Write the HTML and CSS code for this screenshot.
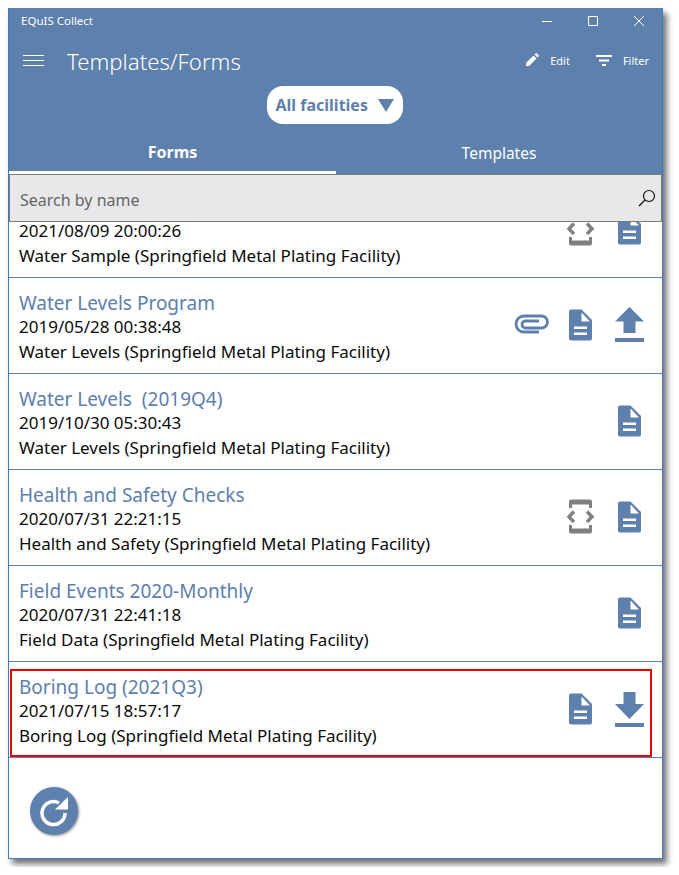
FILE: index.html
```html
<!DOCTYPE html>
<html lang="en">
  <head>
    <title>EQuIS Collect</title>
    <link rel="stylesheet" href="styles.css">
  </head>
  <body>
    <svg class="icon-defs" width="0" height="0">
      <symbol id="doc" viewBox="0 0 49 40">
        <path fill="#5d80ad" d="M15 3.500h10.500l10.500 10.500v18.500a2 2 0 0 1-2 2h-19a2 2 0 0 1-2-2v-27a2 2 0 0 1 2-2z"/>
        <path fill="#fff" d="M25.500 6.500v9h8.500z"/>
        <path fill="#fff" d="M18 20.500h13v2.500h-13zM18 26.500h13v2.500h-13z"/>
      </symbol>
      <symbol id="code" viewBox="0 0 49 40">
        <path fill="#808080" d="M15 1.500h19a2 2 0 0 1 2 2v6.500h-3v-3.500h-17v3.500h-3v-6.500a2 2 0 0 1 2-2zM13 27h3v3.500h17v-3.500h3v6.500a2 2 0 0 1-2 2h-19a2 2 0 0 1-2-2z"/>
        <path fill="none" stroke="#808080" stroke-width="3.400" d="M18 13.500l-5 5.200 5 5.300M31 13.500l5 5.200-5 5.300"/>
      </symbol>
    </svg>

    <div class="window">
      <header class="top">
        <div class="titlebar">
          <span class="app-name">EQuIS Collect</span>
          <div class="win-controls">
            <svg width="46" height="24" viewBox="0 0 46 24"><path stroke="#fff" d="M18 12.500h10"/></svg>
            <svg width="46" height="24" viewBox="0 0 46 24"><path fill="none" stroke="#fff" d="M18.500 7.500h9v9h-9z"/></svg>
            <svg width="46" height="24" viewBox="0 0 46 24"><path stroke="#fff" d="M18 7l10 10M28 7l-10 10"/></svg>
          </div>
        </div>

        <div class="appbar">
          <svg class="menu-icon" width="21" height="12" viewBox="0 0 21 12"><path stroke="#fff" d="M0 .5h21M0 5.500h21M0 10.500h21"/></svg>
          <h1 class="page-title">Templates/Forms</h1>
          <div class="actions">
            <button class="action">
              <svg width="14" height="14" viewBox="0 0 14 14"><path fill="#fff" d="M1 10l7.500-7.500 3 3L4 13H1zM9.500 1.500l1-1a1 1 0 0 1 1.400 0l1.600 1.600a1 1 0 0 1 0 1.400l-1 1z"/></svg>
              Edit
            </button>
            <button class="action">
              <svg width="16" height="11" viewBox="0 0 16 11"><path fill="#fff" d="M0 0h16v2H0zM3 4.500h10v2H3zM6 9h4v2H6z"/></svg>
              Filter
            </button>
          </div>
        </div>

        <div class="facility-row">
          <div class="facility-pill">
            All facilities
            <svg width="16" height="13" viewBox="0 0 16 13"><path fill="#5d80ad" d="M0 0h16l-8 13z"/></svg>
          </div>
        </div>

        <div class="tabs">
          <div class="tab tab-active">Forms</div>
          <div class="tab">Templates</div>
        </div>
      </header>

      <div class="search">
        <span class="search-text">Search by name</span>
        <svg width="18" height="18" viewBox="0 0 18 18"><circle cx="11" cy="7" r="5.500" fill="none" stroke="#111" stroke-width="1.200"/><path stroke="#111" stroke-width="1.300" d="M7 11l-6 6"/></svg>
      </div>

      <div class="list">
        <div class="row row-cut">
          <div class="row-text">
            <div class="row-date">2021/08/09 20:00:26</div>
            <div class="row-sub">Water Sample (Springfield Metal Plating Facility)</div>
          </div>
          <div class="row-icons">
            <svg class="slot"><use href="#code"/></svg>
            <svg class="slot"><use href="#doc"/></svg>
          </div>
        </div>

        <div class="row">
          <div class="row-text">
            <div class="row-title">Water Levels Program</div>
            <div class="row-date">2019/05/28 00:38:48</div>
            <div class="row-sub">Water Levels (Springfield Metal Plating Facility)</div>
          </div>
          <div class="row-icons">
            <svg class="slot" viewBox="0 0 49 40"><path fill="none" stroke="#5d80ad" stroke-width="2.800" d="M32 26H17a8 8 0 0 1 0-16h17.500a6 6 0 0 1 0 12H18.500a3.500 3.500 0 0 1 0-7H32"/></svg>
            <svg class="slot"><use href="#doc"/></svg>
            <svg class="slot" viewBox="0 0 49 40"><path fill="#5d80ad" d="M24.500 1L39 15.500h-8.500V27h-12V15.500H10zM10 32h29v4H10z"/></svg>
          </div>
        </div>

        <div class="row">
          <div class="row-text">
            <div class="row-title">Water Levels&nbsp; (2019Q4)</div>
            <div class="row-date">2019/10/30 05:30:43</div>
            <div class="row-sub">Water Levels (Springfield Metal Plating Facility)</div>
          </div>
          <div class="row-icons">
            <svg class="slot"><use href="#doc"/></svg>
          </div>
        </div>

        <div class="row">
          <div class="row-text">
            <div class="row-title">Health and Safety Checks</div>
            <div class="row-date">2020/07/31 22:21:15</div>
            <div class="row-sub">Health and Safety (Springfield Metal Plating Facility)</div>
          </div>
          <div class="row-icons">
            <svg class="slot"><use href="#code"/></svg>
            <svg class="slot"><use href="#doc"/></svg>
          </div>
        </div>

        <div class="row">
          <div class="row-text">
            <div class="row-title">Field Events 2020-Monthly</div>
            <div class="row-date">2020/07/31 22:41:18</div>
            <div class="row-sub">Field Data (Springfield Metal Plating Facility)</div>
          </div>
          <div class="row-icons">
            <svg class="slot"><use href="#doc"/></svg>
          </div>
        </div>

        <div class="row row-marked">
          <div class="row-text">
            <div class="row-title">Boring Log (2021Q3)</div>
            <div class="row-date">2021/07/15 18:57:17</div>
            <div class="row-sub">Boring Log (Springfield Metal Plating Facility)</div>
          </div>
          <div class="row-icons">
            <svg class="slot"><use href="#doc"/></svg>
            <svg class="slot" viewBox="0 0 49 40"><path fill="#5d80ad" d="M18.500 2h12v12H39L24.500 29 10 14h8.500zM10 33h29v4H10z"/></svg>
          </div>
          <div class="red-box"></div>
        </div>
      </div>

      <div class="footer">
        <button class="refresh">
          <svg width="48" height="48" viewBox="0 0 48 48">
            <path fill="none" stroke="#fff" stroke-width="3.500" d="M29 16A11.500 11.500 0 1 0 35 26"/>
            <path fill="#fff" d="M38 10v12.500H25z"/>
          </svg>
        </button>
      </div>
    </div>
  </body>
</html>
```

FILE: styles.css
```css
* {
  box-sizing: border-box;
}

body {
  margin: 0;
  padding: 8px;
  background: #fff;
  font-family: "Noto Sans", "Open Sans", sans-serif;
}

.icon-defs {
  position: absolute;
}

.window {
  width: 655px;
  height: 851px;
  background: #fff;
  border: 1px solid #3a7dbd;
  border-top-color: #5d80ad;
  box-shadow: 4px 5px 6px rgba(0, 0, 0, 0.55);
  display: flex;
  flex-direction: column;
}

/* Header */
.top {
  background: #5d80ad;
  color: #fff;
}

.titlebar {
  display: flex;
  justify-content: space-between;
  height: 24px;
}

.app-name {
  padding: 3px 0 0 12px;
  font-size: 11.500px;
  line-height: 18px;
}

.win-controls {
  display: flex;
}

.appbar {
  display: flex;
  align-items: center;
  height: 52px;
  padding: 4px 0 0 14px;
}

.menu-icon {
  flex: none;
}

.page-title {
  margin: 0 0 0 23px;
  font-size: 22.200px;
  font-weight: 300;
}

.actions {
  margin-left: auto;
  display: flex;
  gap: 26px;
  padding: 0 13px 2px 0;
}

.action {
  display: flex;
  align-items: center;
  gap: 11px;
  padding: 0;
  border: none;
  background: none;
  color: #fff;
  font: inherit;
  font-size: 11px;
}

.facility-row {
  display: flex;
  justify-content: center;
  height: 38px;
  margin-top: 1px;
  padding-right: 2px;
}

.facility-pill {
  display: flex;
  align-items: center;
  gap: 10px;
  width: 136px;
  padding-left: 9px;
  background: #fff;
  border-radius: 16px;
  color: #5d80ad;
  font-size: 16px;
  font-weight: 700;
  white-space: nowrap;
}

.tabs {
  display: flex;
  height: 50px;
  padding-top: 15px;
}

.tab {
  width: 327px;
  padding-top: 2px;
  text-align: center;
  font-size: 15.500px;
  line-height: 24px;
}

.tab:last-child {
  flex: 1;
}

.tab-active {
  padding-top: 1px;
  border-bottom: 3px solid #fff;
  font-weight: 700;
  font-size: 16px;
}

/* Search */
.search {
  display: flex;
  align-items: center;
  justify-content: space-between;
  height: 48px;
  padding: 3px 5px 0 10px;
  background: #e8e8ea;
  border: 1px solid #7a7a7a;
  font-size: 16px;
  color: #666;
}

.search svg {
  margin-top: -3px;
}

/* List */
.list {
  flex: none;
}

.row {
  position: relative;
  display: flex;
  align-items: center;
  justify-content: space-between;
  height: 96px;
  padding: 0 8px 0 10px;
  border-bottom: 1px solid #5d80ad;
}

.row-cut {
  height: 56px;
}

.row-cut .row-text {
  align-self: flex-end;
  padding: 0 0 9px;
}

.row-cut .row-date {
  line-height: 17.500px;
  margin-bottom: 4px;
}

/* first row is scrolled under the search box, so its icons are cut at the top */
.row-cut .row-icons {
  align-self: flex-end;
  align-items: flex-end;
  height: 28px;
  margin-bottom: 27px;
  overflow: hidden;
}

.row-cut .slot {
  flex: none;
}

.row-text {
  padding-top: 4px;
  line-height: 24.500px;
  white-space: nowrap;
}

.row-title {
  color: #5d80ad;
  font-size: 19px;
}

.row-date,
.row-sub {
  color: #0a0a0a;
  font-size: 17px;
}

.row-icons {
  display: flex;
}

.slot {
  display: block;
  width: 49px;
  height: 40px;
}

.red-box {
  position: absolute;
  left: 1px;
  right: 10px;
  top: 7px;
  bottom: 0;
  border: 2px solid #ee0000;
}

/* Footer */
.footer {
  flex: 1;
  padding: 29px 0 0 21px;
}

.refresh {
  display: block;
  width: 48px;
  height: 48px;
  padding: 0;
  border: none;
  border-radius: 50%;
  background: #5d80ad;
  box-shadow: 1px 1px 3px rgba(0, 0, 0, 0.45);
}

.refresh svg {
  display: block;
}
```
